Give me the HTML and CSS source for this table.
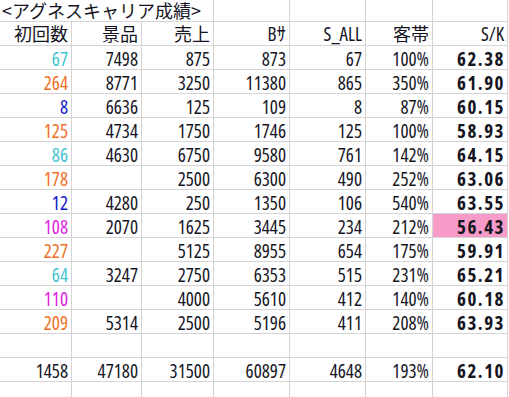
FILE: index.html
```html
<!DOCTYPE html>
<html lang="ja">
<head>
  <meta charset="UTF-8" />
  <title>アグネスキャリア成績</title>
  <link rel="stylesheet" href="styles.css">
</head>
<body>
  <div class="sheet">
    <!-- タイトル -->
    <div class="row title-row">
      <div class="cell title">&lt;アグネスキャリア成績&gt;</div>
      <div class="cell"></div><div class="cell"></div><div class="cell"></div><div class="cell"></div>
    </div>

    <!-- 見出し -->
    <div class="row head">
      <div class="cell jp">初回数</div>
      <div class="cell jp">景品</div>
      <div class="cell jp">売上</div>
      <div class="cell">Bｻ</div>
      <div class="cell">S_ALL</div>
      <div class="cell jp">客帯</div>
      <div class="cell">S/K</div>
    </div>

    <div class="row">
      <div class="cell cyan">67</div><div class="cell">7498</div><div class="cell">875</div><div class="cell">873</div><div class="cell">67</div><div class="cell">100%</div><div class="cell sk">62.38</div>
    </div>
    <div class="row">
      <div class="cell orange">264</div><div class="cell">8771</div><div class="cell">3250</div><div class="cell">11380</div><div class="cell">865</div><div class="cell">350%</div><div class="cell sk">61.90</div>
    </div>
    <div class="row">
      <div class="cell blue">8</div><div class="cell">6636</div><div class="cell">125</div><div class="cell">109</div><div class="cell">8</div><div class="cell">87%</div><div class="cell sk">60.15</div>
    </div>
    <div class="row">
      <div class="cell orange">125</div><div class="cell">4734</div><div class="cell">1750</div><div class="cell">1746</div><div class="cell">125</div><div class="cell">100%</div><div class="cell sk">58.93</div>
    </div>
    <div class="row">
      <div class="cell cyan">86</div><div class="cell">4630</div><div class="cell">6750</div><div class="cell">9580</div><div class="cell">761</div><div class="cell">142%</div><div class="cell sk">64.15</div>
    </div>
    <div class="row">
      <div class="cell orange">178</div><div class="cell"></div><div class="cell">2500</div><div class="cell">6300</div><div class="cell">490</div><div class="cell">252%</div><div class="cell sk">63.06</div>
    </div>
    <div class="row">
      <div class="cell blue">12</div><div class="cell">4280</div><div class="cell">250</div><div class="cell">1350</div><div class="cell">106</div><div class="cell">540%</div><div class="cell sk">63.55</div>
    </div>
    <div class="row">
      <div class="cell magenta">108</div><div class="cell">2070</div><div class="cell">1625</div><div class="cell">3445</div><div class="cell">234</div><div class="cell">212%</div><div class="cell sk low">56.43</div>
    </div>
    <div class="row">
      <div class="cell orange">227</div><div class="cell"></div><div class="cell">5125</div><div class="cell">8955</div><div class="cell">654</div><div class="cell">175%</div><div class="cell sk">59.91</div>
    </div>
    <div class="row">
      <div class="cell cyan">64</div><div class="cell">3247</div><div class="cell">2750</div><div class="cell">6353</div><div class="cell">515</div><div class="cell">231%</div><div class="cell sk">65.21</div>
    </div>
    <div class="row">
      <div class="cell magenta">110</div><div class="cell"></div><div class="cell">4000</div><div class="cell">5610</div><div class="cell">412</div><div class="cell">140%</div><div class="cell sk">60.18</div>
    </div>
    <div class="row">
      <div class="cell orange">209</div><div class="cell">5314</div><div class="cell">2500</div><div class="cell">5196</div><div class="cell">411</div><div class="cell">208%</div><div class="cell sk">63.93</div>
    </div>

    <!-- 空行 -->
    <div class="row">
      <div class="cell"></div><div class="cell"></div><div class="cell"></div><div class="cell"></div><div class="cell"></div><div class="cell"></div><div class="cell"></div>
    </div>

    <!-- 合計 -->
    <div class="row">
      <div class="cell">1458</div><div class="cell">47180</div><div class="cell">31500</div><div class="cell">60897</div><div class="cell">4648</div><div class="cell">193%</div><div class="cell sk">62.10</div>
    </div>

    <div class="row">
      <div class="cell"></div><div class="cell"></div><div class="cell"></div><div class="cell"></div><div class="cell"></div><div class="cell"></div><div class="cell"></div>
    </div>
  </div>
</body>
</html>
```

FILE: styles.css
```css
* {
  box-sizing: border-box;
}

html, body {
  margin: 0;
  padding: 0;
  background: #fff;
  overflow: hidden;
}

.sheet {
  font-family: "Open Sans", "Noto Sans CJK JP", sans-serif;
  font-stretch: 75%;
  font-size: 19px;
  color: #15151f;
}

.row {
  display: grid;
  grid-template-columns: 72px 70px 72px 76px 76px 67px 75px;
  height: 24px;
}

.cell {
  border-right: 1px solid #d4d4d4;
  border-bottom: 1px solid #d4d4d4;
  text-align: right;
  padding: 3px 3px 0 0;
  line-height: 20px;
  white-space: nowrap;
}

.title-row {
  height: 22px;
}

.title {
  grid-column: span 3;
  text-align: left;
  padding: 0 0 0 2px;
  line-height: 20px;
  font-family: "Noto Sans CJK JP", sans-serif;
  font-size: 18px;
}

.head .cell {
  padding-top: 2px;
}

.head .jp {
  font-family: "Noto Sans CJK JP", sans-serif;
  font-size: 18px;
  padding-top: 1px;
  line-height: 21px;
}

.sk {
  font-weight: bold;
  letter-spacing: 1.5px;
  padding-right: 2px;
}

.low {
  background: #f79bc9;
}

.cyan { color: #45c3cf; }
.orange { color: #f0701f; }
.blue { color: #1414c8; }
.magenta { color: #de22de; }
```
